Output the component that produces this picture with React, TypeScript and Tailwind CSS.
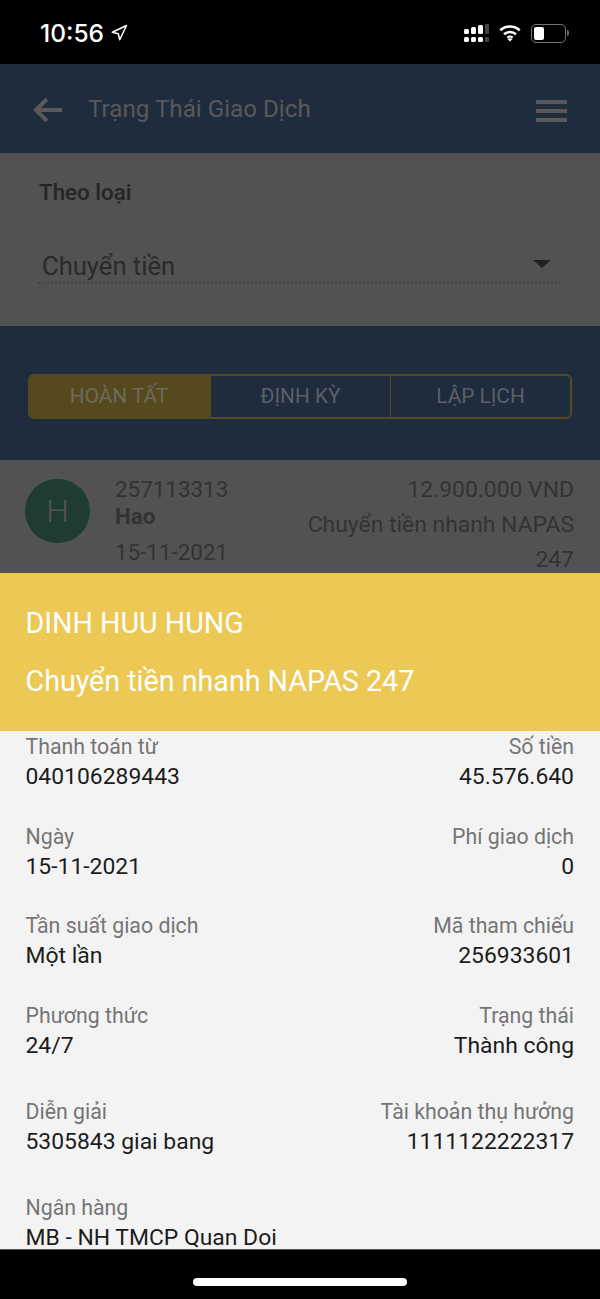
import { Navigation } from "lucide-react";

const details = [
  { left: ["Thanh toán từ", "040106289443"], right: ["Số tiền", "45.576.640"], h: "h-[89.5px]" },
  { left: ["Ngày", "15-11-2021"], right: ["Phí giao dịch", "0"], h: "h-[89.5px]" },
  { left: ["Tần suất giao dịch", "Một lần"], right: ["Mã tham chiếu", "256933601"], h: "h-[89.5px]" },
  { left: ["Phương thức", "24/7"], right: ["Trạng thái", "Thành công"], h: "h-[96px]" },
  { left: ["Diễn giải", "5305843 giai bang"], right: ["Tài khoản thụ hưởng", "1111122222317"], h: "h-[96px]" },
];

function StatusBar() {
  return (
    <div className="flex h-[64px] items-center justify-between bg-black pl-[40px] pr-[31px] pt-[2px] text-white">
      <div className="flex items-center gap-[6px]">
        <span className="font-['Inter',sans-serif] text-[24.5px] font-medium leading-none">10:56</span>
        <Navigation size={18} strokeWidth={2} />
      </div>
      <div className="flex items-center gap-[10px]">
        <svg width="25" height="18" viewBox="0 0 25 18" fill="white">
          <rect x="0" y="5" width="5" height="5" rx="1.5" />
          <rect x="0" y="13" width="5" height="5" rx="1.5" />
          <rect x="7" y="3" width="5" height="7" rx="1.5" />
          <rect x="7" y="13" width="5" height="5" rx="1.5" />
          <rect x="14" y="1" width="5" height="9" rx="1.5" />
          <rect x="14" y="13" width="5" height="5" rx="1.5" />
          <rect x="21" y="0" width="4" height="10" rx="1" fill="#444" />
          <rect x="21" y="13" width="4" height="5" rx="1" fill="#444" />
        </svg>
        <svg width="22" height="18" viewBox="0 0 22 18" fill="none" stroke="white" strokeWidth="2.6">
          <path d="M1.3 6.3C6.8 1.3 15.2 1.3 20.7 6.3" />
          <path d="M5 10.2c3.4-3 8.6-3 12 0" />
          <path d="M8.3 13.6c1.5-1.2 3.9-1.2 5.4 0" strokeWidth="2" />
          <path d="M11 17.6l-2.6-2.7c1.5-1 3.7-1 5.2 0z" fill="white" stroke="none" />
        </svg>
        <div className="flex items-center gap-[1px]">
          <div className="flex h-[19px] w-[35px] items-center rounded-[5px] border border-[#777] p-[2px]">
            <div className="h-full w-[10px] rounded-[2px] bg-white" />
          </div>
          <div className="h-[6px] w-[2px] rounded-r-full bg-[#666]" />
        </div>
      </div>
    </div>
  );
}

function Tab({ label, active, last }: { label: string; active?: boolean; last?: boolean }) {
  return (
    <div
      className={
        active
          ? "flex w-[181px] items-center justify-center bg-[#57491e] pr-[3px] text-[#6b6a5c]"
          : last
            ? "flex flex-1 items-center justify-center text-[#5a6068]"
            : "flex w-[180px] items-center justify-center border-r border-[#57491e] text-[#5a6068]"
      }
    >
      {label}
    </div>
  );
}

export default function App() {
  return (
    <div className="flex h-[1299px] w-[600px] flex-col overflow-hidden bg-black font-['Roboto',sans-serif]">
      <StatusBar />

      {/* dimmed page behind the sheet */}
      <div className="h-[509px] overflow-hidden bg-[#525252]">
        <div className="flex h-[89px] items-center bg-[#1f2c3d] pl-[33px] pr-[33px]">
          <svg width="30" height="26" viewBox="0 0 30 26" fill="none" stroke="#595959" strokeWidth="4" className="mt-[2px]">
            <path d="M29 13H3M14 2 3 13l11 11" />
          </svg>
          <span className="ml-[25px] mt-[2px] flex-1 text-[24.2px] text-[#595959]">Trạng Thái Giao Dịch</span>
          <div className="mt-[4px] flex w-[31px] flex-col gap-[5px]">
            <div className="h-[4px] bg-[#595959]" />
            <div className="h-[4px] bg-[#595959]" />
            <div className="h-[4px] bg-[#595959]" />
          </div>
        </div>

        <div className="h-[173px] px-[39px] pt-[25px]">
          <div className="text-[22.4px] leading-[28px] font-medium text-[#252525]">Theo loại</div>
          <div className="-ml-[1px] mt-[42px] flex h-[36px] items-center justify-between border-b-2 border-dotted border-[#454545] pr-[10px]">
            <span className="mt-[2px] pl-[4px] text-[25.6px] text-[#2a2a2a]">Chuyển tiền</span>
            <div className="-mt-[2px] h-0 w-0 border-x-[9px] border-t-[8px] border-x-transparent border-t-[#222]" />
          </div>
        </div>

        <div className="h-[134px] bg-[#1f2c3d] px-[28px] pt-[48px]">
          <div className="flex h-[45px] w-[544px] overflow-hidden rounded-[6px] border-2 border-[#57491e] text-[20.8px]">
            <Tab label="HOÀN TẤT" active />
            <Tab label="ĐỊNH KỲ" />
            <Tab label="LẬP LỊCH" last />
          </div>
        </div>

        <div className="flex pl-[25px] pr-[26px] pt-[16px] text-[22.9px] text-[#333]">
          <div className="mt-[3px] flex h-[64px] w-[65px] items-center justify-center rounded-full bg-[#1f3b33] text-[32px] font-light text-[#555]">
            H
          </div>
          <div className="ml-[25px] w-[170px] text-[22.4px]">
            <div className="leading-[26px]">257113313</div>
            <div className="leading-[28px] font-bold">Hao</div>
            <div className="mt-[9px] leading-[26px]">15-11-2021</div>
          </div>
          <div className="flex-1 text-right leading-[35px]">
            <div className="-mt-[4px]">12.900.000 VND</div>
            <div>Chuyển tiền nhanh NAPAS</div>
            <div>247</div>
          </div>
        </div>
      </div>

      {/* bottom sheet */}
      <div className="flex h-[158px] flex-col justify-center gap-[22px] bg-[#ecc854] pb-[1px] pl-[25.5px] text-[28.66px] leading-[36px] text-white">
        <div>DINH HUU HUNG</div>
        <div>Chuyển tiền nhanh NAPAS 247</div>
      </div>

      <div className="h-[518px] overflow-hidden bg-[#f3f3f3] pl-[25.5px] pr-[26px] pt-[1px] text-[22.9px] leading-[30px] text-[#1c1c1c]">
        {details.map((row) => (
          <div key={row.left[1]} className={`flex justify-between ${row.h}`}>
            <div>
              <div className="text-[21.3px] text-[#757575]">{row.left[0]}</div>
              <div>{row.left[1]}</div>
            </div>
            <div className="text-right">
              <div className="text-[21.3px] text-[#757575]">{row.right[0]}</div>
              <div>{row.right[1]}</div>
            </div>
          </div>
        ))}
        <div className="text-[21.3px] text-[#757575]">Ngân hàng</div>
        <div>MB - NH TMCP Quan Doi</div>
      </div>

      <div className="flex flex-1 items-center justify-center border-t border-[#555] pt-[14px]">
        <div className="h-[8px] w-[214px] rounded-full bg-white" />
      </div>
    </div>
  );
}
